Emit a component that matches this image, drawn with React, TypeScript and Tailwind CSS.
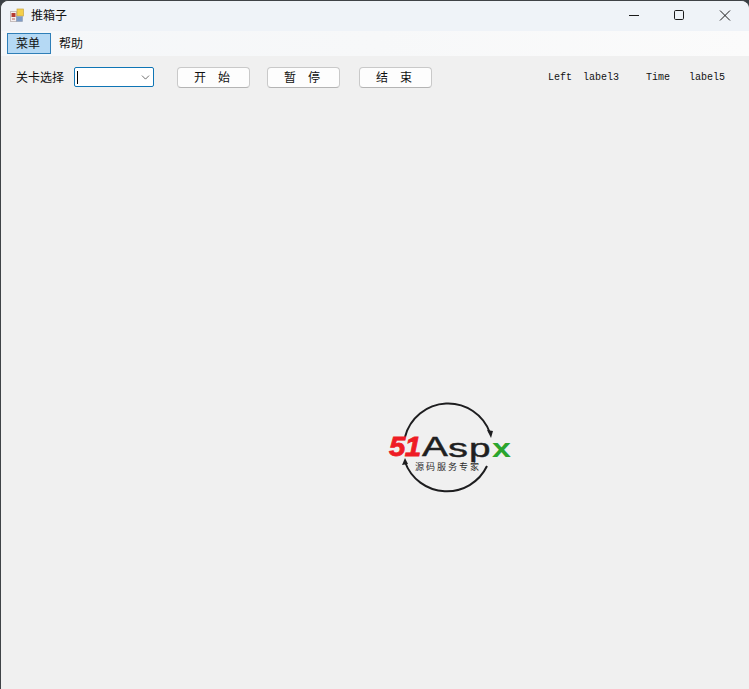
import { ChevronDown } from "lucide-react";

const cjk = "font-['Noto_Sans_CJK_SC','Noto_Sans_CJK_JP',sans-serif]";
const mono = "font-['Liberation_Mono',monospace]";

function ActionButton({ text, className }: { text: string; className: string }) {
  return (
    <button
      className={`flex h-[21px] w-[73px] items-center justify-center rounded-[4px] border border-[#c9c9c9] border-b-[#b4b4b4] bg-[#fdfdfd] pr-[3px] text-[12px] whitespace-pre text-[#111] ${className}`}
    >
      {text}
    </button>
  );
}

function AppIcon() {
  return (
    <svg width="16" height="16" viewBox="0 0 16 16" className="shrink-0">
      <rect x="0.5" y="4.5" width="6" height="10" fill="#f4eeee" stroke="#c4bcbc" />
      <rect x="1.5" y="6" width="4" height="4" fill="#b53a32" />
      <rect x="2" y="11" width="3" height="2" fill="#d8a8a4" />
      <rect x="7" y="2" width="6.5" height="7" fill="#f4cf4a" stroke="#c9a545" strokeWidth="0.7" />
      <rect x="6.5" y="9.5" width="6" height="5" fill="#7e9cc7" stroke="#98a3b5" strokeWidth="0.7" />
    </svg>
  );
}

const logoLetter = "absolute inline-block origin-left leading-none";

function Logo() {
  return (
    <div className="absolute top-[399px] left-[384px] h-[94px] w-[128px] font-['Liberation_Sans',sans-serif] font-bold">
      <svg width="128" height="94" viewBox="0 0 128 94" className="absolute top-0 left-0">
        <path d="M20 37 A44.5 44.5 0 0 1 105 33" fill="none" stroke="#1d1d1f" strokeWidth="2" />
        <path d="M20 62 A44.5 44.5 0 0 0 102 66" fill="none" stroke="#1d1d1f" strokeWidth="2" />
        <polygon points="102,30 108,31 106,38" fill="#1d1d1f" />
        <polygon points="17,65 23,64 20,58" fill="#1d1d1f" />
      </svg>
      <span className={`${logoLetter} top-[33px] left-[4px] scale-x-[1.05] text-[28px] tracking-[-0.5px] text-[#ee1c25] italic [-webkit-text-stroke:0.8px_#ee1c25]`}>
        51
      </span>
      <span className={`${logoLetter} top-[33px] left-[37px] scale-x-[1.38] text-[28px] font-normal text-[#1f1f21] [-webkit-text-stroke:0.5px_#1f1f21]`}>
        A
      </span>
      <span className={`${logoLetter} top-[36px] left-[63px] scale-x-[1.6] text-[25px] font-normal text-[#1f1f21] [-webkit-text-stroke:0.4px_#1f1f21]`}>
        s
      </span>
      <span className={`${logoLetter} top-[36px] left-[84px] scale-x-[1.55] text-[25px] font-normal text-[#1f1f21] [-webkit-text-stroke:0.4px_#1f1f21]`}>
        p
      </span>
      <span className={`${logoLetter} top-[36px] left-[107px] scale-x-[1.36] text-[25px] text-[#2ba52e]`}>x</span>
      <div className={`absolute top-[62px] left-[30px] text-[9px] leading-[9px] font-normal tracking-[2px] whitespace-nowrap text-[#2a2a2a] ${cjk}`}>
        源码服务专家
      </div>
    </div>
  );
}

export default function App() {
  return (
    <div className="h-[689px] w-[749px] overflow-hidden bg-[#3a3f45]">
      <div className={`relative flex h-[689px] w-[749px] flex-col rounded-t-[8px] border-t border-l border-[#3f4347] bg-[#f0f0f0] ${cjk}`}>
        <div className="flex h-[30px] shrink-0 items-center rounded-t-[8px] bg-[#eff3f8] pb-[2px] pl-[9px]">
          <AppIcon />
          <span className="ml-[5px] text-[12px] text-[#111]">推箱子</span>
          <div className="ml-auto flex items-center">
            <svg width="46" height="30" viewBox="0 0 46 30">
              <path d="M18 15.5 H28" stroke="#1a1a1a" strokeWidth="1" />
            </svg>
            <svg width="46" height="30" viewBox="0 0 46 30">
              <rect x="17.5" y="10.5" width="9" height="9" rx="1.2" fill="none" stroke="#1a1a1a" strokeWidth="1" />
            </svg>
            <svg width="46" height="30" viewBox="0 0 46 30">
              <path d="M17 10.5 L27 20.5 M27 10.5 L17 20.5" stroke="#1a1a1a" strokeWidth="1" />
            </svg>
          </div>
        </div>

        <div className="flex h-[25px] shrink-0 items-center bg-gradient-to-r from-[#f5f7f9] via-[#f7f8f9] to-[#fbfbfb] pl-[6px] text-[12px] text-[#111]">
          <span className="flex h-[21px] w-[44px] items-center justify-center border border-[#2f7fb8] bg-[#b5d9f4] pr-[2px] pb-[2px]">菜单</span>
          <span className="ml-[8px] pb-[2px]">帮助</span>
        </div>

        <div className="flex h-[42px] shrink-0 items-center text-[12px] text-[#111]">
          <span className="ml-[15px]">关卡选择</span>
          <div className="relative ml-[10px] h-[20px] w-[80px] rounded-[2px] border border-[#0f75b5] bg-white">
            <span className="absolute top-[3px] left-[2px] h-[13px] w-px bg-black" />
            <ChevronDown className="absolute top-[3px] right-[1px] h-[13px] w-[13px] text-[#222]" strokeWidth={1.2} />
          </div>
          <ActionButton text={"开　始"} className="ml-[23px]" />
          <ActionButton text={"暂　停"} className="ml-[17px]" />
          <ActionButton text={"结　束"} className="ml-[19px]" />
          <div className={`flex text-[10px] text-[#111] ${mono}`}>
            <span className="ml-[116px]">Left</span>
            <span className="ml-[11px]">label3</span>
            <span className="ml-[27px]">Time</span>
            <span className="ml-[19px]">label5</span>
          </div>
        </div>

        <div className="flex-1" />
        <Logo />
      </div>
    </div>
  );
}
